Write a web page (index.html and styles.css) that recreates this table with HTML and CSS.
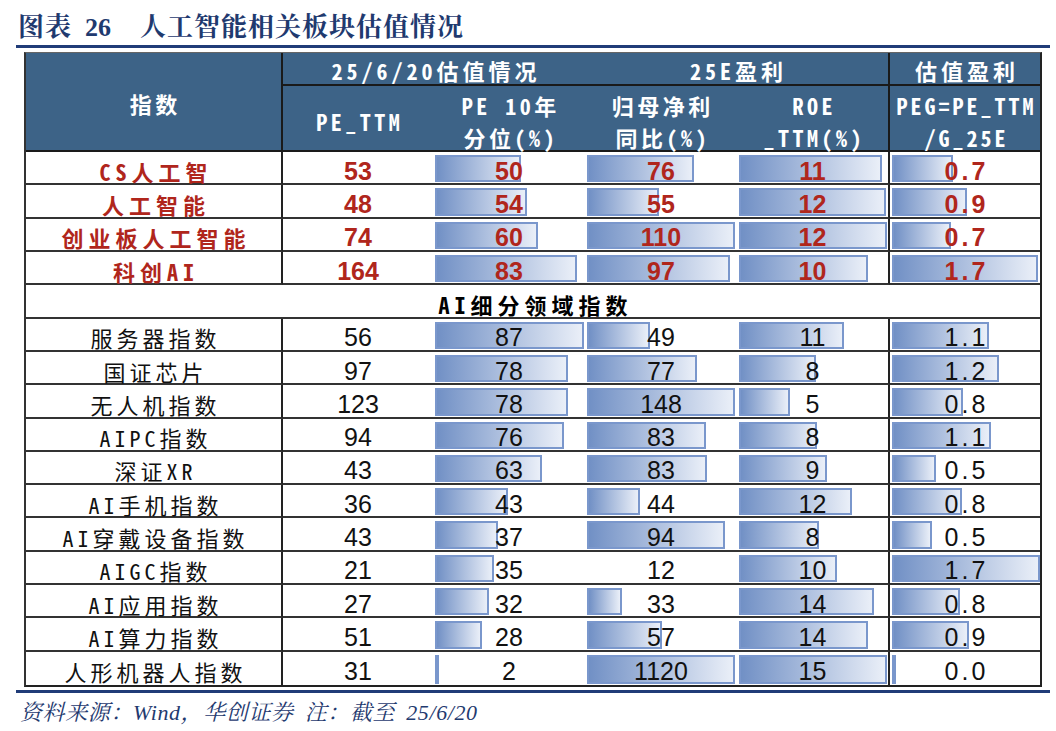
FILE: index.html
```html
<!DOCTYPE html>
<html lang="zh-CN">
<head>
<meta charset="utf-8">
<title>人工智能相关板块估值情况</title>
<link rel="stylesheet" href="styles.css">
</head>
<body>
<div class="page">
  <h1 class="title"><span class="fig-label">图表</span><span class="fig-no">26</span><span class="fig-name">人工智能相关板块估值情况</span></h1>
  <div class="rule"></div>

  <div class="tbl">
    <div class="h h-name">指数</div>
    <div class="h h-group g1">25/6/20估值情况</div>
    <div class="h h-group g2 sep">25E盈利</div>
    <div class="h h-group g3">估值盈利</div>
    <div class="h h-sub">PE_TTM</div>
    <div class="h h-sub">PE 10年<br>分位(%)</div>
    <div class="h h-sub">归母净利<br>同比(%)</div>
    <div class="h h-sub sep">ROE<br>_TTM(%)</div>
    <div class="h h-sub h-peg">PEG=PE_TTM<br>/G_25E</div>

    <div class="row key">
      <div class="c name">CS人工智</div>
      <div class="c"><span class="v">53</span></div>
      <div class="c"><div class="bar" style="width:86px"></div><span class="v">50</span></div>
      <div class="c"><div class="bar" style="width:107px"></div><span class="v">76</span></div>
      <div class="c sep"><div class="bar" style="width:143px"></div><span class="v">11</span></div>
      <div class="c peg"><div class="bar" style="width:61px"></div><span class="v">0.7</span></div>
    </div>
    <div class="row key">
      <div class="c name">人工智能</div>
      <div class="c"><span class="v">48</span></div>
      <div class="c"><div class="bar" style="width:92px"></div><span class="v">54</span></div>
      <div class="c"><div class="bar" style="width:72px"></div><span class="v">55</span></div>
      <div class="c sep"><div class="bar" style="width:147px"></div><span class="v">12</span></div>
      <div class="c peg"><div class="bar" style="width:75px"></div><span class="v">0.9</span></div>
    </div>
    <div class="row key">
      <div class="c name">创业板人工智能</div>
      <div class="c"><span class="v">74</span></div>
      <div class="c"><div class="bar" style="width:103px"></div><span class="v">60</span></div>
      <div class="c"><div class="bar" style="width:148px"></div><span class="v">110</span></div>
      <div class="c sep"><div class="bar" style="width:148px"></div><span class="v">12</span></div>
      <div class="c peg"><div class="bar" style="width:59px"></div><span class="v">0.7</span></div>
    </div>
    <div class="row key">
      <div class="c name">科创AI</div>
      <div class="c"><span class="v">164</span></div>
      <div class="c"><div class="bar" style="width:142px"></div><span class="v">83</span></div>
      <div class="c"><div class="bar" style="width:143px"></div><span class="v">97</span></div>
      <div class="c sep"><div class="bar" style="width:129px"></div><span class="v">10</span></div>
      <div class="c peg"><div class="bar" style="width:146px"></div><span class="v">1.7</span></div>
    </div>

    <div class="row">
      <div class="c section">AI细分领域指数</div>
    </div>

    <div class="row">
      <div class="c name">服务器指数</div>
      <div class="c"><span class="v">56</span></div>
      <div class="c"><div class="bar" style="width:149px"></div><span class="v">87</span></div>
      <div class="c"><div class="bar" style="width:63px"></div><span class="v">49</span></div>
      <div class="c sep"><div class="bar" style="width:105px"></div><span class="v">11</span></div>
      <div class="c peg"><div class="bar" style="width:97px"></div><span class="v">1.1</span></div>
    </div>
    <div class="row">
      <div class="c name">国证芯片</div>
      <div class="c"><span class="v">97</span></div>
      <div class="c"><div class="bar" style="width:133px"></div><span class="v">78</span></div>
      <div class="c"><div class="bar" style="width:110px"></div><span class="v">77</span></div>
      <div class="c sep"><div class="bar" style="width:77px"></div><span class="v">8</span></div>
      <div class="c peg"><div class="bar" style="width:107px"></div><span class="v">1.2</span></div>
    </div>
    <div class="row">
      <div class="c name">无人机指数</div>
      <div class="c"><span class="v">123</span></div>
      <div class="c"><div class="bar" style="width:133px"></div><span class="v">78</span></div>
      <div class="c"><div class="bar" style="width:148px"></div><span class="v">148</span></div>
      <div class="c sep"><div class="bar" style="width:51px"></div><span class="v">5</span></div>
      <div class="c peg"><div class="bar" style="width:71px"></div><span class="v">0.8</span></div>
    </div>
    <div class="row">
      <div class="c name">AIPC指数</div>
      <div class="c"><span class="v">94</span></div>
      <div class="c"><div class="bar" style="width:129px"></div><span class="v">76</span></div>
      <div class="c"><div class="bar" style="width:119px"></div><span class="v">83</span></div>
      <div class="c sep"><div class="bar" style="width:78px"></div><span class="v">8</span></div>
      <div class="c peg"><div class="bar" style="width:99px"></div><span class="v">1.1</span></div>
    </div>
    <div class="row">
      <div class="c name">深证XR</div>
      <div class="c"><span class="v">43</span></div>
      <div class="c"><div class="bar" style="width:107px"></div><span class="v">63</span></div>
      <div class="c"><div class="bar" style="width:120px"></div><span class="v">83</span></div>
      <div class="c sep"><div class="bar" style="width:88px"></div><span class="v">9</span></div>
      <div class="c peg"><div class="bar" style="width:44px"></div><span class="v">0.5</span></div>
    </div>
    <div class="row">
      <div class="c name">AI手机指数</div>
      <div class="c"><span class="v">36</span></div>
      <div class="c"><div class="bar" style="width:73px"></div><span class="v">43</span></div>
      <div class="c"><div class="bar" style="width:53px"></div><span class="v">44</span></div>
      <div class="c sep"><div class="bar" style="width:113px"></div><span class="v">12</span></div>
      <div class="c peg"><div class="bar" style="width:70px"></div><span class="v">0.8</span></div>
    </div>
    <div class="row">
      <div class="c name">AI穿戴设备指数</div>
      <div class="c"><span class="v">43</span></div>
      <div class="c"><div class="bar" style="width:63px"></div><span class="v">37</span></div>
      <div class="c"><div class="bar" style="width:138px"></div><span class="v">94</span></div>
      <div class="c sep"><div class="bar" style="width:80px"></div><span class="v">8</span></div>
      <div class="c peg"><div class="bar" style="width:40px"></div><span class="v">0.5</span></div>
    </div>
    <div class="row">
      <div class="c name">AIGC指数</div>
      <div class="c"><span class="v">21</span></div>
      <div class="c"><div class="bar" style="width:59px"></div><span class="v">35</span></div>
      <div class="c"><span class="v">12</span></div>
      <div class="c sep"><div class="bar" style="width:98px"></div><span class="v">10</span></div>
      <div class="c peg"><div class="bar" style="width:148px"></div><span class="v">1.7</span></div>
    </div>
    <div class="row">
      <div class="c name">AI应用指数</div>
      <div class="c"><span class="v">27</span></div>
      <div class="c"><div class="bar" style="width:54px"></div><span class="v">32</span></div>
      <div class="c"><div class="bar" style="width:35px"></div><span class="v">33</span></div>
      <div class="c sep"><div class="bar" style="width:135px"></div><span class="v">14</span></div>
      <div class="c peg"><div class="bar" style="width:68px"></div><span class="v">0.8</span></div>
    </div>
    <div class="row">
      <div class="c name">AI算力指数</div>
      <div class="c"><span class="v">51</span></div>
      <div class="c"><div class="bar" style="width:47px"></div><span class="v">28</span></div>
      <div class="c"><div class="bar" style="width:75px"></div><span class="v">57</span></div>
      <div class="c sep"><div class="bar" style="width:129px"></div><span class="v">14</span></div>
      <div class="c peg"><div class="bar" style="width:77px"></div><span class="v">0.9</span></div>
    </div>
    <div class="row">
      <div class="c name">人形机器人指数</div>
      <div class="c"><span class="v">31</span></div>
      <div class="c"><div class="bar" style="width:4px"></div><span class="v">2</span></div>
      <div class="c"><div class="bar" style="width:148px"></div><span class="v">1120</span></div>
      <div class="c sep"><div class="bar" style="width:148px"></div><span class="v">15</span></div>
      <div class="c peg"><div class="bar" style="width:2px"></div><span class="v">0.0</span></div>
    </div>
  </div>

  <div class="rule rule-bottom"></div>
  <p class="source">资料来源：Wind，华创证券 注：截至 25/6/20</p>
</div>
</body>
</html>
```

FILE: styles.css
```css
html, body {
  margin: 0;
  padding: 0;
  background: #ffffff;
}

.page {
  width: 1034px;
  padding: 10px 0 0 16px;
}

.title {
  height: 30px;
  margin: 0 0 0 2px;
  overflow: visible;
  font-family: "Noto Serif CJK SC", "Noto Sans CJK SC", serif;
  font-weight: bold;
  font-size: 26px;
  line-height: 30px;
  letter-spacing: 1px;
  color: #1f3a6f;
  white-space: nowrap;
}

.title .fig-no {
  font-family: "Liberation Serif", serif;
  letter-spacing: 0;
  margin-left: 13px;
}

.title .fig-name {
  margin-left: 29px;
}

.rule {
  height: 3px;
  background: #203c78;
  margin-top: 5px;
}

.rule-bottom {
  margin-top: 3px;
}

.tbl {
  box-sizing: border-box;
  width: 1018px;
  height: 635px;
  margin: 4px 0 0 8px;
  display: grid;
  grid-template-columns: 257px 150px 152px 152px 153px 150px;
  grid-template-rows: 33px 66px repeat(16, minmax(0, 1fr));
  border-top: 1px solid #666666;
  border-left: 2px solid #333333;
  border-right: 2px solid #222222;
  border-bottom: 2px solid #222222;
}

.row {
  display: contents;
}

/* header */
.h {
  box-sizing: border-box;
  min-height: 0;
  background: #3d6387;
  color: #ffffff;
  font-family: "Noto Sans Mono CJK SC", "Noto Sans CJK SC", sans-serif;
  font-weight: bold;
  font-size: 22px;
  line-height: 32px;
  letter-spacing: 3.5px;
  padding-left: 3.5px;
  display: flex;
  align-items: center;
  justify-content: center;
  text-align: center;
  white-space: nowrap;
  border-bottom: 2px solid #1a1a1a;
}

.h-name {
  grid-row: 1 / span 2;
  border-right: 2px solid #1a1a1a;
  padding-top: 3px;
}

.h-group {
  padding-top: 3px;
  letter-spacing: 4px;
  padding-left: 4px;
}

.g1,
.g2 {
  grid-column: span 2;
}

.h-sub {
  padding-top: 6px;
}

.h-peg {
  letter-spacing: 3px;
  padding-left: 3px;
}

.h.sep {
  border-right: 2px solid #1a1a1a;
}

/* body cells */
.c {
  box-sizing: border-box;
  min-height: 0;
  position: relative;
  display: flex;
  align-items: center;
  justify-content: center;
  padding-top: 6px;
  border-bottom: 2px solid #333333;
  font-family: "Liberation Sans", Arial, sans-serif;
  font-size: 25px;
  line-height: 20px;
  color: #111111;
  white-space: nowrap;
}

.row:last-child .c {
  border-bottom: 0;
}

.c.sep {
  border-right: 2px solid #222222;
}

.c.name {
  border-right: 2px solid #222222;
  font-family: "Noto Sans Mono CJK SC", "Noto Sans CJK SC", sans-serif;
  font-size: 22px;
  letter-spacing: 4px;
  padding-left: 4px;
}

.row.key .c.name {
  letter-spacing: 5px;
  padding-left: 5px;
}

.c.section {
  grid-column: 1 / -1;
  font-family: "Noto Sans Mono CJK SC", "Noto Sans CJK SC", sans-serif;
  font-weight: bold;
  font-size: 22px;
  letter-spacing: 5px;
  padding-left: 5px;
  color: #000000;
}

.row.key .c {
  color: #b0261c;
  font-weight: bold;
}

.v {
  position: relative;
}

.c.peg .v {
  letter-spacing: 3px;
  padding-left: 3px;
}

/* data bars */
.bar {
  position: absolute;
  left: 2px;
  top: 3px;
  bottom: 1px;
  box-sizing: border-box;
  border: 2px solid #7a97cc;
  background: linear-gradient(to right, #7190c5 0%, #eaeff8 100%);
}

.source {
  margin: 8px 0 0 4px;
  font-family: "Liberation Serif", "Noto Serif CJK SC", "Noto Sans CJK SC", serif;
  font-style: italic;
  font-size: 22px;
  line-height: 24px;
  letter-spacing: 0.6px;
  word-spacing: 5px;
  color: #1f3a6f;
  white-space: nowrap;
}
```
